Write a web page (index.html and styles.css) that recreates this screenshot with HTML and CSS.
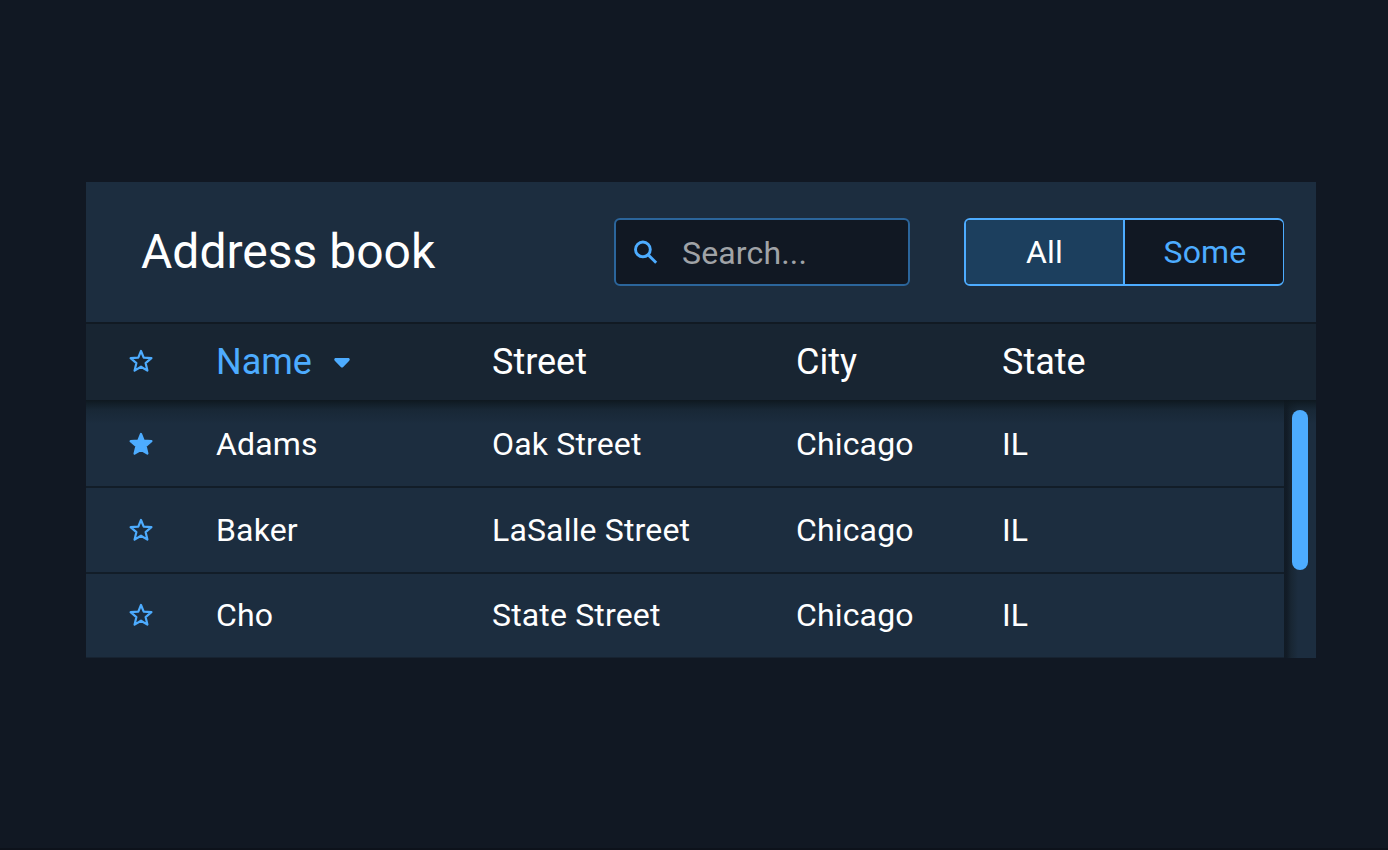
FILE: index.html
```html
<!DOCTYPE html>
<html lang="en">
<head>
<meta charset="utf-8">
<title>Address book</title>
<link rel="stylesheet" href="styles.css">
</head>
<body>
<svg class="defs" aria-hidden="true">
  <symbol id="star" viewBox="0 0 24 24"><path d="M12 2L14.7 8.6L22.4 9.2L16.6 14.1L18.4 21.6L12 17.7L5.6 21.6L7.4 14.1L1.6 9.2L9.3 8.6Z" stroke-width="2.2" stroke-linejoin="round" stroke="currentColor"/></symbol>
</svg>
<main class="panel">
  <header class="toolbar">
    <h1 class="title">Address book</h1>
    <label class="search">
      <svg class="search-icon" viewBox="0 0 24 24"><circle cx="8.9" cy="9.4" r="7.4"/><path d="M14 14.6L22.2 22.8"/></svg>
      <span class="placeholder">Search...</span>
    </label>
    <div class="segmented">
      <div class="segment selected">All</div>
      <div class="segment">Some</div>
    </div>
  </header>
  <div class="columns grid">
    <svg class="star"><use href="#star"/></svg>
    <div class="sorted">Name<svg class="caret" viewBox="0 0 16 10"><path d="M2 0H14C15.9 0 16.3 1.7 15 3L9.2 8.9Q8 10 6.8 8.9L1 3C-.3 1.7 .1 0 2 0Z"/></svg></div>
    <div>Street</div><div>City</div><div>State</div>
  </div>
  <div class="body">
    <div class="rows">
      <div class="row grid"><svg class="star filled"><use href="#star"/></svg><div>Adams</div><div>Oak Street</div><div>Chicago</div><div>IL</div></div>
      <div class="row grid"><svg class="star"><use href="#star"/></svg><div>Baker</div><div>LaSalle Street</div><div>Chicago</div><div>IL</div></div>
      <div class="row grid"><svg class="star"><use href="#star"/></svg><div>Cho</div><div>State Street</div><div>Chicago</div><div>IL</div></div>
    </div>
    <div class="track"><div class="thumb"></div></div>
  </div>
</main>
</body>
</html>
```
FILE: styles.css
```css
* { box-sizing: border-box; }
body {
  margin: 0;
  height: 850px;
  padding: 182px 72px 0 86px;
  background: #111823;
  border-bottom: 2px solid #0d121b;
  color: #fff;
  font-family: Roboto, sans-serif;
  overflow: hidden;
}
.defs { display: none; }
.panel { width: 1230px; height: 476px; }
.toolbar {
  display: flex;
  align-items: center;
  height: 140px;
  padding: 0 32px 0 55px;
  background: #1c2d3f;
}
.title {
  flex: 1;
  margin: 0;
  font-size: 48px;
  line-height: 56px;
  font-weight: 400;
}
.search {
  display: flex;
  align-items: center;
  width: 296px;
  height: 68px;
  margin-right: 54px;
  padding-left: 18px;
  border: 2px solid #2b659b;
  border-radius: 6px;
  background: #111823;
}
.search-icon {
  width: 24px;
  height: 24px;
  margin-right: 24px;
  fill: none;
  stroke: #4dacff;
  stroke-width: 2.9;
}
.placeholder { padding-top: 2px; color: #a0a3a7; font-size: 32px; letter-spacing: 0.16px; }
.segmented {
  display: flex;
  width: 320px;
  height: 68px;
  border: 2px solid #4dacff;
  border-right-width: 1px;
  border-radius: 6px;
  overflow: hidden;
  background: #111823;
}
.segment {
  flex: 1;
  padding-left: 2px;
  text-align: center;
  line-height: 64px;
  font-size: 32px;
  letter-spacing: 0.16px;
  color: #4dacff;
}
.segment.selected {
  flex: 0 0 159px;
  padding-left: 0;
  border-right: 2px solid #4dacff;
  background: #1c3f5e;
  color: #fff;
}
.grid {
  display: grid;
  grid-template-columns: 87px 276px 304px 206px 1fr;
  align-items: center;
  padding-left: 43px;
}
.columns {
  height: 78px;
  border-top: 2px solid #111a23;
  background: #182532;
  font-size: 36px;
}
.columns .star { margin-bottom: 2px; }
.sorted { display: flex; align-items: center; color: #4dacff; }
.caret { width: 16px; height: 10px; margin: 2px 0 0 22px; fill: currentColor; }
.star { width: 24px; height: 24px; color: #4dacff; fill: none; }
.star.filled { fill: currentColor; }
.body {
  position: relative;
  display: flex;
  height: 258px;
  background: #1c2d3f;
}
.body::before {
  content: "";
  position: absolute;
  z-index: 1;
  inset: 0 0 auto;
  height: 24px;
  background: linear-gradient(rgba(14, 23, 30, 0.95), rgba(15, 26, 34, 0.75) 4px, rgba(17, 29, 38, 0.35) 10px, transparent);
}
.rows { width: 1198px; padding-top: 2px; }
.row {
  height: 86px;
  border-bottom: 2px solid #121d28;
  font-size: 32px;
  letter-spacing: 0.16px;
}
.row:nth-child(2) { padding-bottom: 1px; }
.row:last-child { height: 84px; padding-bottom: 2px; border-bottom: 1px solid #172331; }
.track {
  flex: 1;
  padding: 10px 0 0 8px;
  background: linear-gradient(90deg, #111b25, #121c27 3px, #182633 7px, #1c2d3f 14px);
}
.thumb { position: relative; z-index: 2; width: 16px; height: 160px; border-radius: 8px; background: #4dacff; }
```
